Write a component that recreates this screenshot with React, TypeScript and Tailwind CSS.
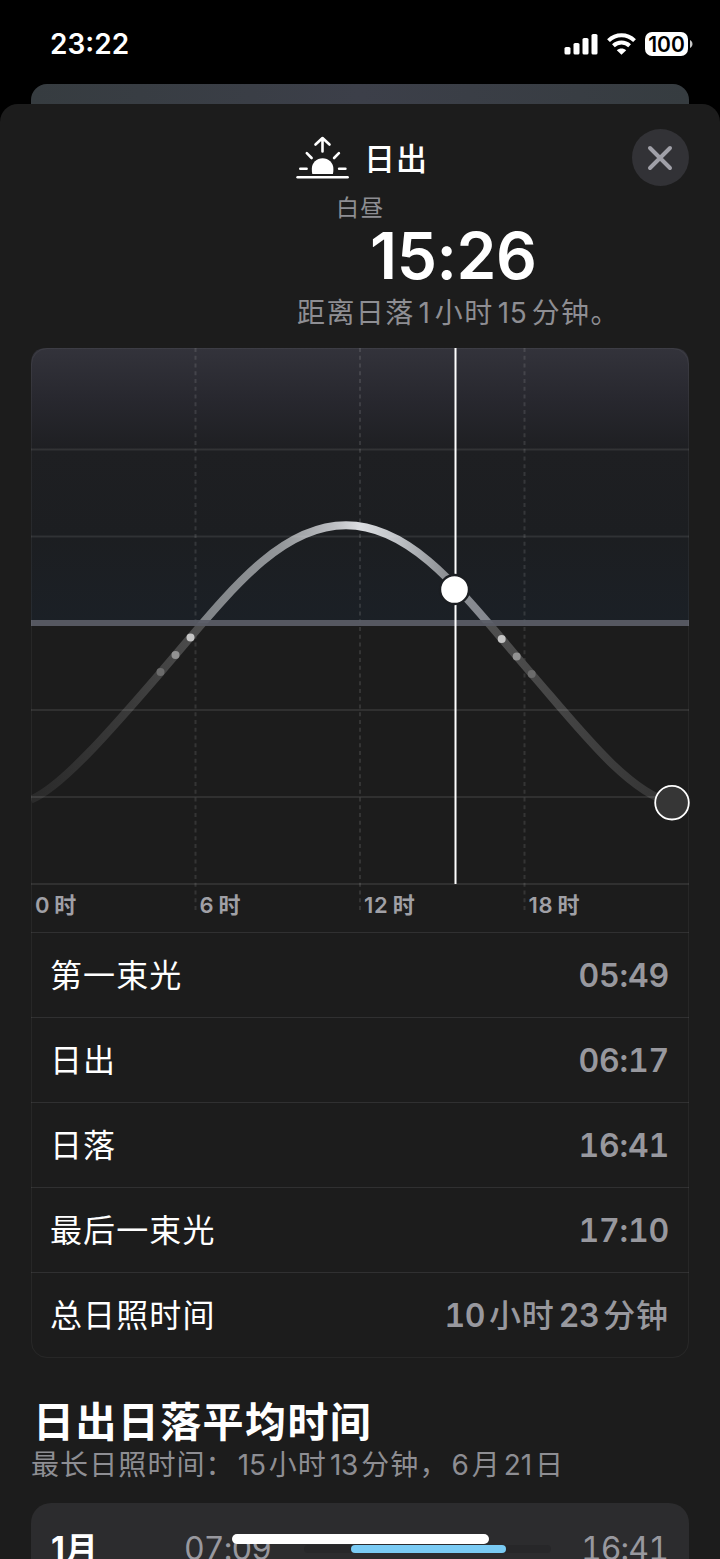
import React from 'react';
import clsx from 'clsx';

const stats = [
    { label: '第一束光', value: '05:49' },
    { label: '日出', value: '06:17' },
    { label: '日落', value: '16:41' },
    { label: '最后一束光', value: '17:10' },
    { label: '总日照时间', value: '10小时23分钟' },
];

const gridRows = [101.5, 188.5, 362, 449, 536];
const gridColumns = [164.5, 329, 493.5];
const hours = ['0时', '6时', '12时', '18时'];

const twilightDots = [
    { x: 129.5, y: 324, color: '#6b6b6b' },
    { x: 144.5, y: 307, color: '#929292' },
    { x: 159.5, y: 289.5, color: '#c4c4c4' },
    { x: 470.7, y: 291, color: '#c4c4c4' },
    { x: 485.7, y: 308.5, color: '#929292' },
    { x: 500.7, y: 326, color: '#6b6b6b' },
];

const sunPath =
    'M0 451.5C30 439.5 79.7 382.3 129.7 324.3C194.7 248.9 246.5 177.3 315 177.3C383.5 177.3 435 250 500.3 325.5C550 383 597 444 641 455';

// Digits sit slightly apart from the Chinese characters around them
function Mixed({ text, gap, className }: { text: string; gap: string; className?: string }) {
    return (
        <span className={clsx('whitespace-nowrap', className)}>
            {text.split(/(\d+)/).filter(Boolean).map((part, index) => (
                <span key={index} className={/\d/.test(part) ? gap : undefined}>{part}</span>
            ))}
        </span>
    );
}

function StatusBar() {
    return (
        <div className="flex h-[84px] items-start justify-between pl-[50px] pr-[27px]">
            <span className="mt-[30px] text-[28px] font-semibold leading-7">23:22</span>
            <div className="mt-8 flex items-center">
                <svg width="34" height="24" viewBox="0 0 34 24" fill="#fff">
                    <rect x="0.5" y="15" width="6" height="7.5" rx="1.6" />
                    <rect x="9.5" y="11" width="6" height="11.5" rx="1.6" />
                    <rect x="18.5" y="6" width="6" height="16.5" rx="1.6" />
                    <rect x="27.5" y="2" width="6" height="20.5" rx="1.6" />
                </svg>
                <svg className="ml-[9px]" width="29" height="24" viewBox="0 0 29 24" fill="none" stroke="#fff">
                    <path d="M1.5 8.6C8.9 1.4 20.1 1.4 27.5 8.6" strokeWidth="4" />
                    <path d="M6.4 13.7C11 9.4 18 9.4 22.6 13.7" strokeWidth="4" />
                    <path d="M9.8 18.2C12.5 15.8 16.5 15.8 19.2 18.2L14.5 22.8Z" fill="#fff" stroke="none" />
                </svg>
                <div className="ml-[9px] flex h-6 w-[43px] items-center justify-center rounded-[7px] bg-white text-[21px] font-semibold leading-none text-black">
                    100
                </div>
                <svg className="ml-[2px]" width="3" height="8" viewBox="0 0 3 8" fill="#c8c8c8">
                    <path d="M0 0C3.3 1.5 3.3 6.5 0 8Z" />
                </svg>
            </div>
        </div>
    );
}

function SunriseIcon() {
    return (
        <svg width="53" height="44" viewBox="0 0 53 44" fill="none" stroke="#fff" strokeWidth="2.6" strokeLinecap="round" strokeLinejoin="round">
            <path d="M26.5 15.5V2.5M19.5 8.5L26.5 2L33.5 8.5" />
            <path d="M10.8 17.2L15.6 22M42.9 17.2L38.1 22M4.3 32.8H10.6M43.1 32.8H49.4" />
            <path d="M1.6 41.2H51.6" />
            <path d="M16.3 38Q15.8 35.5 15.8 33A10.8 10.8 0 0 1 37.4 33Q37.4 35.5 36.9 38Z" fill="#fff" stroke="none" />
        </svg>
    );
}

function SunChart() {
    return (
        <svg className="block" width="658" height="536" viewBox="0 0 658 536" overflow="visible">
            <defs>
                <linearGradient id="sky" x1="0" y1="0" x2="0" y2="1">
                    <stop offset="0" stopColor="#33333b" />
                    <stop offset="0.18" stopColor="#28282f" />
                    <stop offset="0.37" stopColor="#1e1f22" />
                    <stop offset="0.68" stopColor="#1c1e21" />
                    <stop offset="1" stopColor="#1b2026" />
                </linearGradient>
                <linearGradient id="day" gradientUnits="userSpaceOnUse" x1="0" y1="0" x2="658" y2="0">
                    <stop offset="0.26" stopColor="#7f8387" />
                    <stop offset="0.38" stopColor="#94979a" />
                    <stop offset="0.46" stopColor="#bcbec2" />
                    <stop offset="0.5" stopColor="#dcdee2" />
                    <stop offset="0.56" stopColor="#bec1c5" />
                    <stop offset="0.63" stopColor="#8d9094" />
                    <stop offset="0.7" stopColor="#83878f" />
                </linearGradient>
                <linearGradient id="night" gradientUnits="userSpaceOnUse" x1="0" y1="0" x2="658" y2="0">
                    <stop offset="0" stopColor="#2a2a2a" />
                    <stop offset="0.15" stopColor="#3a3a3a" />
                    <stop offset="0.27" stopColor="#505050" />
                    <stop offset="0.69" stopColor="#505050" />
                    <stop offset="0.8" stopColor="#454545" />
                    <stop offset="1" stopColor="#303030" />
                </linearGradient>
                <clipPath id="aboveHorizon"><rect width="658" height="275" /></clipPath>
                <clipPath id="belowHorizon"><rect y="275" width="658" height="261" /></clipPath>
            </defs>
            <path d="M0 275V16Q0 0 16 0H642Q658 0 658 16V275Z" fill="url(#sky)" />
            {gridColumns.map((x) => (
                <line key={x} x1={x} x2={x} y1="0" y2="564" stroke="#fff" strokeOpacity="0.11" strokeWidth="2" strokeDasharray="4 3.75" />
            ))}
            <path d={sunPath} fill="none" stroke="url(#day)" strokeWidth="8" clipPath="url(#aboveHorizon)" />
            <path d={sunPath} fill="none" stroke="url(#night)" strokeWidth="8" clipPath="url(#belowHorizon)" />
            {gridRows.map((y) => (
                <line key={y} x1="0" x2="658" y1={y} y2={y} stroke="#fff" strokeOpacity="0.09" strokeWidth="2" />
            ))}
            <rect x="0" y="272" width="658" height="6" fill="#5a5c66" fillOpacity="0.93" />
            {twilightDots.map((dot) => (
                <circle key={dot.x} cx={dot.x} cy={dot.y} r="4" fill={dot.color} />
            ))}
            <line x1="424.5" x2="424.5" y1="0" y2="536" stroke="#fff" strokeWidth="2" />
            <circle cx="423.5" cy="241.5" r="14.5" fill="#fff" stroke="#1b1e22" strokeWidth="2.4" />
            <circle cx="641" cy="454.7" r="16.8" fill="#363636" stroke="#fff" strokeWidth="1.8" />
        </svg>
    );
}

function SunCard() {
    return (
        <section className="relative h-[1010px] w-[658px]">
            <SunChart />
            <div className="grid h-12 grid-cols-4 text-[22px] font-semibold leading-none text-[#a0a0a6]">
                {hours.map((hour) => (
                    <div key={hour} className="pl-1 pt-[10px]">
                        <Mixed text={hour} gap="mr-1 tracking-[0.8px]" />
                    </div>
                ))}
            </div>
            {stats.map((stat) => (
                <div key={stat.label} className="flex h-[85px] items-center justify-between border-t border-[#303031] pl-[19px] pr-5 pt-[2px]">
                    <span className="text-[32px] tracking-[1.1px] text-white">{stat.label}</span>
                    {stat.value.includes(':') ? (
                        <span className="pb-px text-[32px] font-semibold tabular-nums tracking-[-0.2px] text-[#98989e]">{stat.value}</span>
                    ) : (
                        <Mixed text={stat.value} gap="mx-1 first:ml-0 font-semibold tabular-nums tracking-[-0.5px]" className="text-[32px] font-medium tracking-[0.9px] text-[#98989e]" />
                    )}
                </div>
            ))}
            <div className="pointer-events-none absolute inset-0 rounded-2xl border border-white/5" />
        </section>
    );
}

function MonthRow() {
    return (
        <div className="flex h-[92px] w-[658px] items-center rounded-[20px] bg-[#2c2c2e] pl-5 pr-[21px]">
            <Mixed text="1月" gap="mr-[1px]" className="w-[133px] text-[32px] font-bold text-white" />
            <span className="w-[120px] text-[32px] tabular-nums tracking-[-0.9px] text-[#98989e]">07:09</span>
            <div className="h-2 w-[247px] rounded-full bg-[#272729]">
                <div className="ml-[47px] h-2 w-[155px] rounded-full bg-[#7acbf4]" />
            </div>
            <span className="ml-auto text-[32px] tabular-nums tracking-[-0.9px] text-[#98989e]">16:41</span>
        </div>
    );
}

export default function App() {
    return (
        <main lang="zh-CN" className="relative h-[1559px] w-[720px] overflow-hidden bg-black font-['Inter','Noto_Sans_CJK_SC',sans-serif] text-white">
            <StatusBar />
            <div className="mx-[31px] h-5 rounded-t-2xl bg-gradient-to-r from-[#363c40] via-[#3c3f49] to-[#363c40]" />
            <div className="h-[1455px] rounded-t-[18px] bg-[#1c1c1c]">
                <header className="flex h-[88px] items-start justify-between pl-[296px] pr-[31px]">
                    <div className="flex items-start">
                        <div className="mt-8"><SunriseIcon /></div>
                        <h1 className="ml-[15px] mt-[39px] text-[31px] font-medium leading-8 tracking-[1px]">日出</h1>
                    </div>
                    <button className="mt-[25px] flex size-[57px] items-center justify-center rounded-full bg-[#323236]">
                        <svg className="-ml-px" width="26" height="26" viewBox="0 0 26 26" stroke="#a0a0a8" strokeWidth="4" strokeLinecap="round">
                            <path d="M3 3L23 23M23 3L3 23" />
                        </svg>
                    </button>
                </header>
                <div className="h-[156px]">
                    <div className="h-7 pl-[336px] pt-1 text-[23px] leading-6 tracking-[1.2px] text-[#8e8e93]">白昼</div>
                    <div className="h-[77px] pl-[370px] text-[64px] font-semibold leading-[72px] tracking-[-0.4px]">15:26</div>
                    <Mixed text="距离日落1小时15分钟。" gap="mx-1 tracking-[0.8px]" className="block pl-[297px] text-[28px] leading-8 tracking-[1.4px] text-[#8e8e93]" />
                </div>
                <div className="mx-[31px]">
                    <SunCard />
                    <h2 className="mt-[42px] pl-[2px] text-[41px] font-bold leading-[44px] tracking-[1.4px]">日出日落平均时间</h2>
                    <Mixed text="最长日照时间：15小时13分钟，6月21日" gap="mx-[3px] tracking-[-0.2px]" className="mt-[3px] block text-[28px] leading-9 tracking-[1.1px] text-[#8e8e93]" />
                    <div className="mt-5"><MonthRow /></div>
                </div>
            </div>
            <div className="absolute bottom-[15px] left-[232px] h-[10px] w-[257px] rounded-full bg-white" />
        </main>
    );
}
